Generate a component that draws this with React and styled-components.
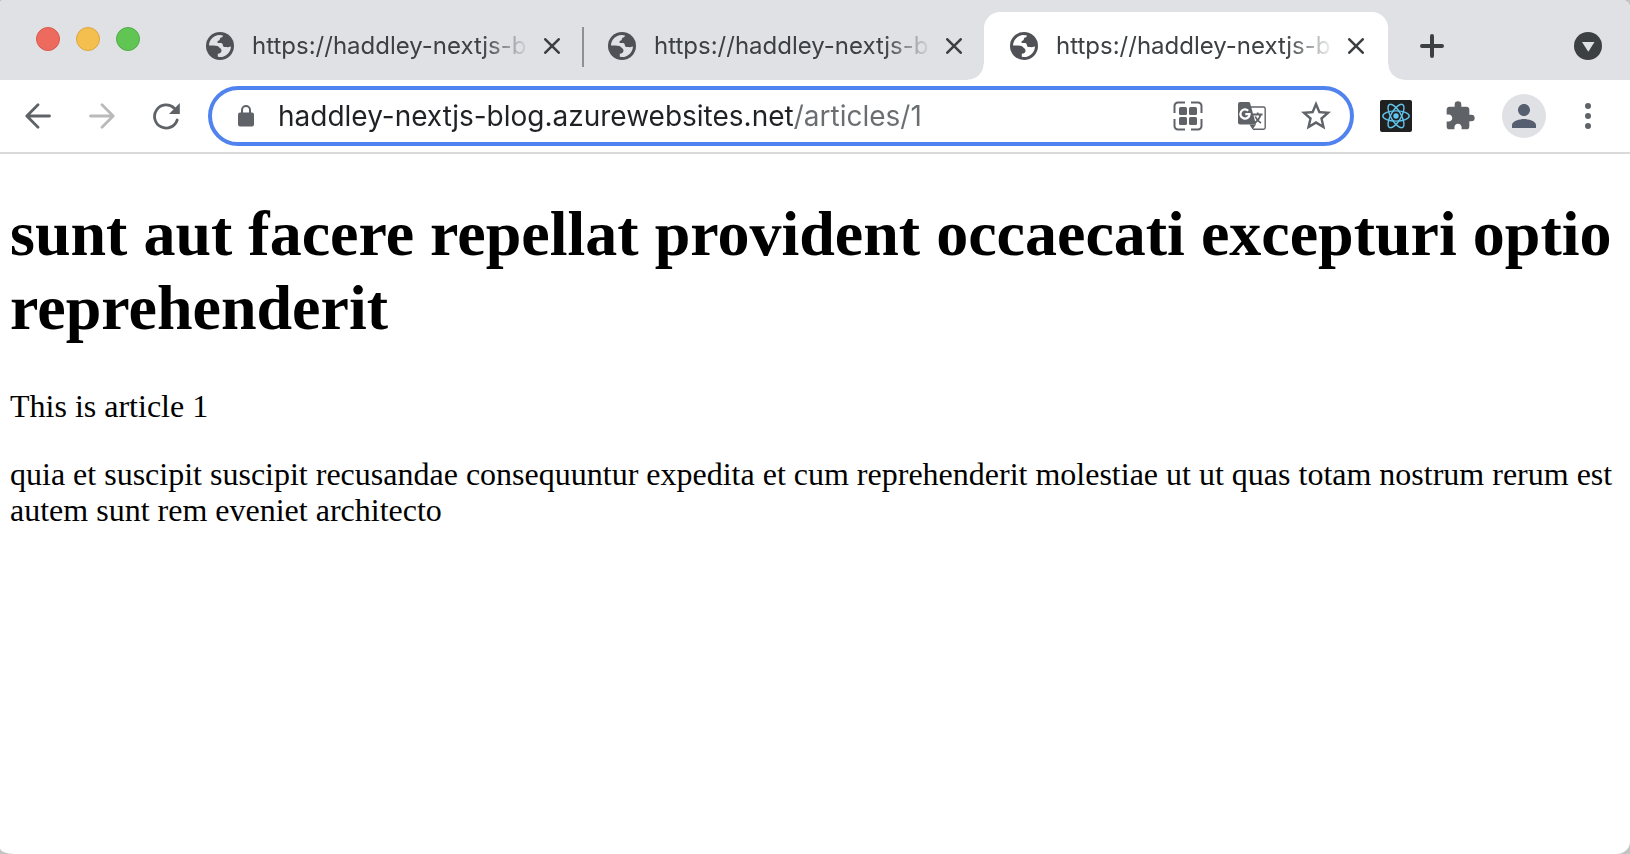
import React from "react";
import styled, { createGlobalStyle, css } from "styled-components";
import { MdExtension, MdPerson, MdStarBorder } from "react-icons/md";

const GlobalStyle = createGlobalStyle`
  *, *::before, *::after { box-sizing: border-box; }
  body { margin: 0; background: #c4c4c4; }
`;

const uiFont = `Inter, "Liberation Sans", sans-serif`;

const BrowserWindow = styled.div`
  display: flex;
  flex-direction: column;
  min-height: 100vh;
  overflow: hidden;
  border-radius: 4px 8px 14px 14px / 4px 8px 12px 6px;
  background: #fff;
  font-family: ${uiFont};
`;

const TabStrip = styled.header`
  display: flex;
  align-items: stretch;
  height: 80px;
  padding: 12px 28px 0 36px;
  background: #dfe1e5;
`;

const WindowControls = styled.div`
  display: flex;
  flex: none;
  gap: 16px;
  width: 144px;
  padding-top: 15px;
`;

const WindowDot = styled.button`
  width: 24px;
  height: 24px;
  padding: 0;
  border: 1px solid ${(p) => p.$edge};
  border-radius: 50%;
  background: ${(p) => p.$fill};
`;

const Tabs = styled.nav`
  display: flex;
  flex: 0 1 1208px;
  min-width: 0;
`;

const activeTab = css`
  flex-basis: 404px;
  border-radius: 16px 16px 0 0;
  background: #fff;

  &::before,
  &::after {
    content: "";
    position: absolute;
    bottom: 0;
    width: 16px;
    height: 16px;
  }
  &::before {
    right: 100%;
    background: radial-gradient(circle at 0 0, #dfe1e5 15px, #fff 16px);
  }
  &::after {
    left: 100%;
    background: radial-gradient(circle at 100% 0, #dfe1e5 15px, #fff 16px);
  }
`;

const Tab = styled.div`
  position: relative;
  display: flex;
  flex: 0 1 402px;
  align-items: center;
  min-width: 0;
  padding: 0 16px 0 26px;
  ${(p) =>
    p.$divided &&
    css`
      background: linear-gradient(#8d9095, #8d9095) 0 15px / 2px 40px no-repeat;
    `}
  ${(p) => p.$active && activeTab}
`;

const TabTitle = styled.a`
  flex: 0 1 278px;
  min-width: 0;
  margin: 0 9px 0 18px;
  overflow: hidden;
  color: #3c4043;
  font-size: 24px;
  line-height: 32px;
  text-decoration: none;
  white-space: nowrap;
  mask-image: linear-gradient(to left, transparent, #000 48px);
`;

const IconButton = styled.button`
  display: grid;
  flex: none;
  place-items: center;
  width: ${(p) => p.$width || 64}px;
  height: ${(p) => p.$height || 52}px;
  padding: 0;
  border: 0;
  background: none;
  color: ${(p) => p.$color || "#5f6368"};

  svg { display: block; }
`;

const StripActions = styled.div`
  display: flex;
  flex: 1;
  align-items: center;
  justify-content: space-between;
  padding-left: 28px;
`;

const Toolbar = styled.div`
  display: flex;
  align-items: center;
  height: 74px;
  padding: 0 10px 0 6px;
  border-bottom: 2px solid #d9dadc;
`;

const AddressBar = styled.form`
  display: flex;
  flex: 1;
  align-items: center;
  min-width: 0;
  height: 60px;
  margin: 0 10px;
  padding: 0 2px 0 14px;
  border: 4px solid #5083ef;
  border-radius: 30px;
`;

const AddressInput = styled.input`
  flex: 1;
  min-width: 0;
  height: 44px;
  margin-left: 12px;
  padding: 0;
  border: 0;
  outline: 0;
  background: linear-gradient(to right, #202124 517px, #6b6e70 517px);
  background-clip: text;
  color: transparent;
  font-family: inherit;
  font-size: 28px;
`;

const Avatar = styled.span`
  display: grid;
  place-items: center;
  width: 44px;
  height: 44px;
  border-radius: 50%;
  background: #dfe1e5;
  color: #565f70;
`;

const Article = styled.main`
  padding: 43px 10px;
  color: #000;
  font-family: "Liberation Serif", serif;
`;

const Heading = styled.h1`
  margin: 0 0 43px;
  font-size: 64px;
  font-weight: 700;
  line-height: 74px;
`;

const Paragraph = styled.p`
  margin: 0 0 32px;
  font-size: 32px;
  line-height: 36px;
`;

const GlobeIcon = ({ land = "#dfe1e5" }) => (
  <svg width="28" height="28" viewBox="0 0 28 28" fill="none" aria-hidden="true">
    <circle cx="14" cy="14" r="14" fill="#505156" />
    <path
      d="M3 13.6C3.1 7.8 7.6 3.2 13.5 3L17 3.4C16.6 4.8 15.8 5.6 14.4 5.7C13.7 6 14.2 8.2 13 8.4C11.6 8.6 11.2 9.4 11.7 11H15C16.4 11 16.8 12 16.9 13.4C17.2 15 19 15.2 20.6 15.1C22 15.6 22.6 14.5 25 14.4C24.6 20.4 20 25 14 25L11.8 24.7V21.8C14 21.8 15.6 20.6 15.5 18.6C15.4 16.4 14 16.4 12.6 14.8C11.4 13.5 7 13.6 3 13.6Z"
      fill={land}
    />
  </svg>
);

const CloseIcon = () => (
  <svg width="16" height="16" viewBox="0 0 16 16" stroke="currentColor" strokeWidth="2.6" strokeLinecap="round" aria-hidden="true">
    <path d="M1.3 1.3l13.4 13.4M14.7 1.3L1.3 14.7" />
  </svg>
);

const PlusIcon = () => (
  <svg width="24" height="24" viewBox="0 0 24 24" stroke="currentColor" strokeWidth="4" strokeLinecap="round" aria-hidden="true">
    <path d="M12 2v20M2 12h20" />
  </svg>
);

const TabSearchIcon = () => (
  <svg width="28" height="28" viewBox="0 0 28 28" aria-hidden="true">
    <circle cx="14" cy="14" r="14" fill="#3c4043" />
    <path d="M8 10h12.5l-6.2 9.8z" fill="#dfe1e5" />
  </svg>
);

const ArrowIcon = ({ forward }) => (
  <svg width="26" height="26" viewBox="0 0 26 26" fill="none" stroke="currentColor" strokeWidth="2.8" strokeLinecap="round" strokeLinejoin="round" aria-hidden="true">
    <path d={forward ? "M1.5 13H24M13 1.8L24.2 13L13 24.2" : "M24.5 13H2M13 1.8L1.8 13L13 24.2"} />
  </svg>
);

const ReloadIcon = () => (
  <svg width="28" height="28" viewBox="0 0 28 28" fill="none" aria-hidden="true">
    <path d="M22.3 6.2A11.6 11.6 0 1 0 25.2 18" stroke="currentColor" strokeWidth="2.8" strokeLinecap="round" />
    <path d="M27.8 1V12H17z" fill="currentColor" />
  </svg>
);

const LockIcon = () => (
  <svg width="16" height="22" viewBox="0 0 16 22" fill="none" aria-hidden="true">
    <rect y="7.5" width="16" height="14" rx="2" fill="#5f6368" />
    <path d="M4 8V5a4 4 0 0 1 8 0v3" stroke="#5f6368" strokeWidth="2" />
  </svg>
);

const QrIcon = () => (
  <svg width="30" height="30" viewBox="0 0 30 30" fill="none" aria-hidden="true">
    <path d="M1.5 12V5A3.5 3.5 0 0 1 5 1.5h7M18 1.5h7A3.5 3.5 0 0 1 28.5 5v7M28.5 18v7a3.5 3.5 0 0 1-3.5 3.5h-7M12 28.5H5A3.5 3.5 0 0 1 1.5 25v-7" stroke="currentColor" strokeWidth="2" />
    <g fill="currentColor">
      <rect x="6" y="6" width="8" height="8" rx="1.5" />
      <rect x="16" y="6" width="8" height="8" rx="1.5" />
      <rect x="6" y="16" width="8" height="8" rx="1.5" />
      <rect x="16" y="16" width="8" height="8" rx="1.5" />
    </g>
  </svg>
);

const TranslateIcon = () => (
  <svg width="28" height="28" viewBox="0 0 28 28" fill="none" aria-hidden="true">
    <path d="M13 5h12.5a1.7 1.7 0 0 1 1.7 1.7v18.8a1.7 1.7 0 0 1-1.7 1.7H15" stroke="currentColor" strokeWidth="1.4" />
    <path d="M2 0h8.7a1.5 1.5 0 0 1 1.4 1L18 22.5H2a2 2 0 0 1-2-2V2a2 2 0 0 1 2-2z" fill="currentColor" />
    <path d="M11.5 22.5H18L14.5 27.5z" fill="currentColor" />
    <path d="M10.2 8.7A4.6 4.6 0 1 0 11.6 12.2H7.3" stroke="#fff" strokeWidth="2.2" />
    <path d="M15 12.5h9.5M19.7 10.5v2M22.6 12.5c-.7 3-2.8 6.2-6 8.4M17.2 14.5c1.2 2.7 3 5 5.8 6.5" stroke="currentColor" strokeWidth="1.8" />
  </svg>
);

const ReactIcon = () => (
  <svg width="32" height="32" viewBox="0 0 32 32" fill="none" aria-hidden="true">
    <rect width="32" height="32" rx="2" fill="#202020" />
    <circle cx="16" cy="16" r="2.7" fill="#61c5ef" />
    <g stroke="#61c5ef" strokeWidth="1.4">
      <ellipse cx="16" cy="16" rx="13.2" ry="5.1" />
      <ellipse cx="16" cy="16" rx="13.2" ry="5.1" transform="rotate(60 16 16)" />
      <ellipse cx="16" cy="16" rx="13.2" ry="5.1" transform="rotate(120 16 16)" />
    </g>
  </svg>
);

const MenuIcon = () => (
  <svg width="6" height="26" viewBox="0 0 6 26" fill="currentColor" aria-hidden="true">
    <circle cx="3" cy="3" r="3" />
    <circle cx="3" cy="13" r="3" />
    <circle cx="3" cy="23" r="3" />
  </svg>
);

const windowDots = [
  { label: "Close window", fill: "#ed6a5e", edge: "#d9584d" },
  { label: "Minimize window", fill: "#f5bf4f", edge: "#dba73d" },
  { label: "Zoom window", fill: "#61c554", edge: "#52ad46" },
];

const tabs = [{ id: 1 }, { id: 2, divided: true }, { id: 3, active: true }];

export default function App() {
  return (
    <>
      <GlobalStyle />
      <BrowserWindow>
        <TabStrip>
          <WindowControls>
            {windowDots.map((dot) => (
              <WindowDot key={dot.label} type="button" aria-label={dot.label} $fill={dot.fill} $edge={dot.edge} />
            ))}
          </WindowControls>
          <Tabs aria-label="Tabs">
            {tabs.map((tab) => (
              <Tab key={tab.id} $active={tab.active} $divided={tab.divided}>
                <GlobeIcon land={tab.active ? "#fff" : undefined} />
                <TabTitle href="#" aria-current={tab.active ? "page" : undefined}>
                  https://haddley-nextjs-b
                </TabTitle>
                <IconButton type="button" aria-label="Close tab" $width={26} $height={26} $color="#3c4043">
                  <CloseIcon />
                </IconButton>
              </Tab>
            ))}
          </Tabs>
          <StripActions>
            <IconButton type="button" aria-label="New tab" $width={32} $height={32} $color="#3c4043">
              <PlusIcon />
            </IconButton>
            <IconButton type="button" aria-label="Search tabs" $width={28} $height={28}>
              <TabSearchIcon />
            </IconButton>
          </StripActions>
        </TabStrip>

        <Toolbar>
          <IconButton type="button" aria-label="Back">
            <ArrowIcon />
          </IconButton>
          <IconButton type="button" aria-label="Forward" $color="#bababa">
            <ArrowIcon forward />
          </IconButton>
          <IconButton type="button" aria-label="Reload">
            <ReloadIcon />
          </IconButton>
          <AddressBar>
            <IconButton type="button" aria-label="Site information" $width={40}>
              <LockIcon />
            </IconButton>
            <AddressInput
              type="text"
              aria-label="Address"
              spellCheck={false}
              defaultValue="haddley-nextjs-blog.azurewebsites.net/articles/1"
            />
            <IconButton type="button" aria-label="Create QR code">
              <QrIcon />
            </IconButton>
            <IconButton type="button" aria-label="Translate this page">
              <TranslateIcon />
            </IconButton>
            <IconButton type="button" aria-label="Bookmark this page">
              <MdStarBorder size={36} />
            </IconButton>
          </AddressBar>
          <IconButton type="button" aria-label="React Developer Tools">
            <ReactIcon />
          </IconButton>
          <IconButton type="button" aria-label="Extensions">
            <MdExtension size={32} />
          </IconButton>
          <IconButton type="button" aria-label="Profile">
            <Avatar>
              <MdPerson size={36} />
            </Avatar>
          </IconButton>
          <IconButton type="button" aria-label="Menu">
            <MenuIcon />
          </IconButton>
        </Toolbar>

        <Article>
          <Heading>sunt aut facere repellat provident occaecati excepturi optio reprehenderit</Heading>
          <Paragraph>This is article 1</Paragraph>
          <Paragraph>
            quia et suscipit suscipit recusandae consequuntur expedita et cum reprehenderit molestiae ut ut quas totam
            nostrum rerum est autem sunt rem eveniet architecto
          </Paragraph>
        </Article>
      </BrowserWindow>
    </>
  );
}
